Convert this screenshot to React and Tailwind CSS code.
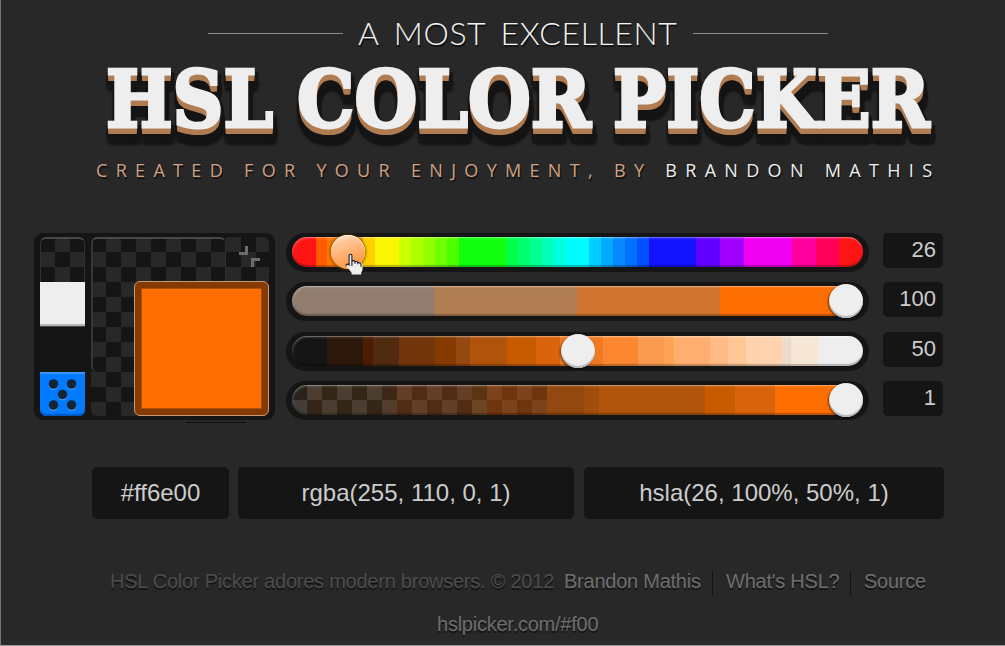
import React from "react";

const HUE = [
  [24, "#ff1414"], [11, "#ff5a00"], [12, "#ff7a00"], [24, "#ffa000"], [12, "#ffd000"], [24, "#faf500"], [12, "#ccff00"],
  [12, "#b0ff00"], [12, "#90ff00"], [12, "#70ff00"], [12, "#4cff00"], [47, "#12ff12"], [12, "#00ff48"],
  [12, "#00ff70"], [12, "#00ff90"], [11, "#00ffb8"], [13, "#00ffdc"], [23, "#00fcff"], [12, "#00ccff"],
  [12, "#00aaff"], [12, "#0a88ff"], [12, "#0070ff"], [12, "#0050ff"], [47, "#1212ff"], [24, "#6000ff"],
  [24, "#a000ff"], [48, "#f000f0"], [24, "#ff009c"], [23, "#ff0058"], [24, "#ff1414"],
];
const SAT = [[142, "#917d70"], [143, "#b07c52"], [143, "#d07430"], [143, "#ff6e00"]];
const LIGHT = [
  [35, "#151515"], [36, "#2b180b"], [10, "#4d1c05"], [26, "#512b10"], [36, "#73360a"], [21, "#843a00"],
  [14, "#95480f"], [37, "#b0540c"], [29, "#c85a00"], [24, "#d9640c"], [43, "#f07a22"], [35, "#fb8830"],
  [26, "#f99a50"], [10, "#ffa455"], [36, "#ffae70"], [18, "#ffbb85"], [18, "#ffc796"], [36, "#ffd3ae"],
  [9, "#ecdccd"], [27, "#f5e6d5"], [35, "#eeeeee"],
];
const ALPHA = [
  [15, "#3a1c0030"], [75, "#5a28004d"], [15, "#6a2c0060"], [75, "#88340073"], [15, "#94440080"], [60, "#a0400099"],
  [37, "#92480f"], [15, "#a04d0e"], [66, "#b0540c"], [40, "#b0540c"], [30, "#c85a00"],
  [40, "#d9640c"], [88, "#ff6e00"],
];

function steps(segments) {
  let x = 0;
  const stops = segments.map(([w, c]) => {
    const s = `${c} ${x}px ${x + w}px`;
    x += w;
    return s;
  });
  return `linear-gradient(90deg, ${stops.join(", ")})`;
}

const SLIDERS = [
  { name: "Hue", value: "26", segments: HUE, knob: 56, h: "h-[49px]", active: true },
  { name: "Saturation", value: "100", segments: SAT, knob: 554, h: "h-[50px]" },
  { name: "Lightness", value: "50", segments: LIGHT, knob: 286, h: "h-[49px]" },
  { name: "Alpha", value: "1", segments: ALPHA, knob: 554, h: "h-[39px]", checker: true },
];

function Hand() {
  return (
    <svg className="absolute left-[14px] top-[18px]" width="19" height="23" viewBox="0 0 19 23">
      <path
        d="M5.500 1.200c1 0 1.700.7 1.700 1.700v4.600l8.200 2c1.500.4 2.200 1 2.200 2.300v3.600c0 2-.8 3-1.400 4.200V21.500H6.600v-1.700L2 13.800c-1.500-2 .3-3.500 1.800-2V2.900c0-1 .7-1.700 1.700-1.700z"
        fill="#eee"
      />
      <path
        d="M6.900 13V2.500c0-1.600-2.800-1.600-2.800 0v9.500c-1.500-1.800-3.800-.6-2.800 1M7.200 8c1-.8 2.500-.4 2.800.8v2M10 8.800c1.200-.7 2.800-.2 2.800 1v1.500M12.800 9.800c1.400-.5 3.200.2 3.200 2v2"
        stroke="#1b1b28" strokeWidth="1.100" fill="none"
      />
    </svg>
  );
}

function Slider({ s }) {
  return (
    <div className={`flex items-start ${s.h}`}>
      <div className="h-[39px] w-[583px] rounded-full bg-[#151515] px-1.5 pt-1">
        <div
          className={`relative h-[30px] w-[571px] rounded-full ${
            s.checker
              ? "bg-[conic-gradient(#464646_25%,#242424_0_50%,#464646_0_75%,#242424_0)] bg-[length:30px_30px]"
              : ""
          }`}
        >
          <div
            className="h-full w-full rounded-full shadow-[inset_0_1px_0_rgba(255,255,255,0.28),inset_1px_2px_2px_rgba(255,255,255,0.12),inset_0_-2px_1px_rgba(0,0,0,0.25)]"
            style={{ backgroundImage: steps(s.segments) }}
          />
          <div className="absolute -top-0.5 size-[34px]" style={{ left: s.knob - 17 }}>
            <div
              className={`size-full rounded-full ${
                s.active
                  ? "bg-[linear-gradient(160deg,#f5e6d8_8%,#ffc796_25%,#ffbb85_40%,#ff9d50_75%,#ffb050)] shadow-[0_0_3px_1px_rgba(90,60,0,0.7),inset_0_1px_0_#fff3e0]"
                  : "bg-[#eee] shadow-[-1px_1px_2px_rgba(0,0,0,0.55),inset_0_-2px_1px_#b5b5b5]"
              }`}
            />
            {s.active && <Hand />}
          </div>
        </div>
      </div>
      <div className="ml-3.5 flex h-[35px] w-[60px] items-center justify-end rounded-[5px] bg-[#151515] pr-[7px] text-[22px] leading-none text-[#ccc]">
        <span className="-mt-0.5">{s.value}</span>
      </div>
    </div>
  );
}

const CHECK = "bg-[conic-gradient(#282828_25%,#151515_0_50%,#282828_0_75%,#151515_0)] bg-[length:30px_30px]";

function Swatches() {
  return (
    <div className="relative flex h-[187px] w-[241px] gap-1.5 rounded-[9px] bg-[#151515] px-1.5 pt-1">
      <div className="flex w-[45px] flex-col">
        <div className={`h-[45px] bg-origin-border rounded-t-[6px] border-x border-t-2 border-x-[#303030] border-t-[#484848] ${CHECK}`} />
        <div className="h-[44px] border-b-2 border-[#b5b5b5] bg-[#eee]" />
        <div className="h-[46px] border-t border-[#444]" />
        <div className="h-[44px] rounded-b-[6px] bg-[#007aff] shadow-[inset_0_2px_1px_#3c96ff,inset_0_-2px_1px_#0058c0]">
          <svg width="45" height="44" viewBox="0 0 45 44">
            {[[13.5, 12], [31.5, 12], [22.5, 22.5], [13.5, 33], [31.5, 33]].map(([x, y]) => (
              <g key={`${x}-${y}`}>
                <circle cx={x} cy={y + 1} r="4.800" fill="#5aa8ff" />
                <circle cx={x} cy={y} r="4.800" fill="#142536" />
              </g>
            ))}
          </svg>
        </div>
      </div>
      <div className={`relative h-[179px] w-[178px] rounded-[6px] ${CHECK}`}>
        <div className="h-[135px] w-[135px] rounded-[6px] border-l-2 border-r border-t-2 border-l-[#363636] border-r-[#303030] border-t-[#484848]" />
        <svg className="absolute left-[148px] top-[9px]" width="21" height="21" viewBox="0 0 21 21" fill="#6c6c6c">
          <path d="M6 0h3v9H0V6h6zM12 12h9v3h-6v6h-3z" />
        </svg>
        <div className="absolute bottom-0 right-0 h-[135px] w-[135px] rounded-[6px] border border-[#c89a78] bg-[#843a00] p-1.5">
          <div className="h-full w-full border border-[#a85008] bg-[#ff6e00]" />
        </div>
      </div>
      <div className="absolute left-[152px] top-[189px] h-px w-[60px] bg-[#101010]" />
    </div>
  );
}

const TITLE_SHADOW =
  "[text-shadow:-1px_3px_#b07c52,1px_3px_#b07c52,-1px_5px_#b07c52,1px_5px_#b07c52,-1px_7px_#b07c52,1px_7px_#b07c52,-3px_3px_1px_#151515,5px_3px_1px_#151515,-3px_8px_1px_#151515,5px_8px_1px_#151515,-3px_12px_1px_#151515,6px_12px_1px_#151515,-2px_17px_2px_#151515,2px_18px_2px_#151515,5px_17px_2px_#151515]";

function Word({ children, box, scale }) {
  return (
    <span className={`block ${box}`}>
      <span className={`inline-block origin-left [-webkit-text-stroke:3px_#eee] ${scale} ${TITLE_SHADOW}`}>{children}</span>
    </span>
  );
}

export default function App() {
  return (
    <div className="flex h-[646px] w-[1005px] flex-col overflow-hidden border-b border-l border-b-[#999] border-l-[#777] bg-[#282828] font-['Liberation_Sans',Arial,sans-serif]">
      <header className="flex h-[233px] flex-col">
        <div className="flex h-[66px] items-center pl-[207px]">
          <div className="h-px w-[135px] bg-[#8a8d8a]" />
          <div className="w-[350px] whitespace-nowrap pl-[15px] font-['Lato',sans-serif] text-[32px] font-light leading-none tracking-[0.6px] text-[#f2f2f2] [text-shadow:1px_2px_#111] [word-spacing:6px]">
            A MOST EXCELLENT
          </div>
          <div className="h-px w-[135px] bg-[#8a8d8a]" />
        </div>
        <h1 className="flex h-[91px] whitespace-nowrap pl-[105px] pt-px font-['DejaVu_Serif_Condensed','DejaVu_Serif',serif] text-[79px] font-bold leading-[66px] text-[#eee] [font-stretch:condensed]">
          <Word box="w-[191px]" scale="scale-x-[0.992]">HSL</Word>
          <Word box="w-[316px]" scale="scale-x-[1.015]">COLOR</Word>
          <Word box="w-[330px]" scale="scale-x-[0.994]">PICKER</Word>
        </h1>
        <p className="whitespace-nowrap pl-[95px] font-['Open_Sans',sans-serif] text-[18px] leading-[26px] tracking-[8.32px] text-[#d0a080] [text-shadow:1px_2px_#111]">
          CREATED FOR YOUR ENJOYMENT, BY <span className="text-[#eee]">BRANDON MATHIS</span>
        </p>
      </header>
      <main className="flex h-[234px] gap-[11px] pl-[33px]">
        <Swatches />
        <div className="flex flex-col">
          {SLIDERS.map((s) => (
            <Slider key={s.name} s={s} />
          ))}
        </div>
      </main>
      <section className="flex h-[52px] pl-[91px] text-center text-[24px] leading-[52px] text-[#ccc]">
        <div className="w-[137px] rounded-[5px] bg-[#151515]">#ff6e00</div>
        <div className="ml-[9px] w-[336px] rounded-[5px] bg-[#151515]">rgba(255, 110, 0, 1)</div>
        <div className="ml-2.5 w-[360px] rounded-[5px] bg-[#151515]">hsla(26, 100%, 50%, 1)</div>
      </section>
      <footer className="flex flex-col pt-[50px] text-[20px] leading-[24px] tracking-[-0.24px] text-[#6e6e6e] [text-shadow:0_2px_#141414]">
        <div className="flex whitespace-nowrap pl-[109px]">
          <span className="w-[454px] text-[#4c4c4c]">HSL Color Picker adores modern browsers. © 2012</span>
          <span className="w-[148px]">Brandon Mathis</span>
          <span className="mt-0.5 h-[25px] w-px bg-[#141414]" />
          <span className="w-[137px] pl-[13px]">What's HSL?</span>
          <span className="mt-0.5 h-[25px] w-px bg-[#141414]" />
          <span className="pl-[13px]">Source</span>
        </div>
        <div className="mt-4 pl-[436px]">hslpicker.com/#f00</div>
      </footer>
    </div>
  );
}
